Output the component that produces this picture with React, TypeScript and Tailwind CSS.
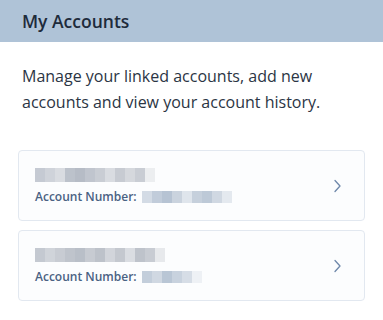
const Blur = ({ shades, h = "h-[14px]" }: { shades: string[]; h?: string }) => (
  <div className={`flex ${h} blur-[0.7px]`}>
    {shades.map((c, i) => (
      <div key={i} className="w-[10px] h-full" style={{ background: c }} />
    ))}
  </div>
);

const Chevron = () => (
  <svg width="10" height="14" viewBox="0 0 10 14" fill="none" className="text-[#6e88aa]">
    <path d="M3 1.5L8 7L3 12.5" stroke="currentColor" strokeWidth="1.3" strokeLinecap="round" strokeLinejoin="round" />
  </svg>
);

const accounts = [
  {
    name: ["#c5cad3", "#cfd3da", "#d9dce1", "#bcc2cb", "#b6bcc6", "#c0c5ce", "#c9cdd4", "#d9dce1", "#c7cbd2", "#d5d8dd", "#c9cdd4", "#eceef0"],
    num: ["#d3dbe5", "#c1ccda", "#b6c3d3", "#cad3de", "#dfe5ec", "#c6d0dc", "#bdc9d7", "#d0d8e2", "#e4e9ef"],
  },
  {
    name: ["#c4c9d1", "#d0d4da", "#c8ccd3", "#bfc4cc", "#b9bfc8", "#c7cbd2", "#bdc2ca", "#d2d5db", "#c4c8cf", "#dadde2", "#bec3cb", "#c8ccd3", "#e7e9ec"],
    num: ["#c3cedb", "#d0d8e2", "#b9c6d5", "#c8d2de", "#d6dde6", "#eef1f5"],
  },
];

export default function App() {
  return (
    <div className="w-[383px] h-[320px] bg-white font-['Open_Sans',sans-serif]">
      <div className="h-[42px] bg-[#afc3d7] flex items-center px-[22px]">
        <h1 className="text-[17.5px] font-semibold text-[#1e2b3b]">My Accounts</h1>
      </div>
      <p className="px-[22px] pt-[21px] text-[16px] leading-[26px] text-[#2b3544]">
        Manage your linked accounts, add new accounts and view your account history.
      </p>
      <div className="flex flex-col gap-[9px] px-[18px] mt-[35px]">
        {accounts.map((a, i) => (
          <div
            key={i}
            className="h-[71px] rounded-[4px] border border-[#e2e8f0] bg-[#fcfdfe] flex items-center justify-between pl-[16px] pr-[22px]"
          >
            <div className="flex flex-col gap-[6px] pt-[2px]">
              <Blur shades={a.name} />
              <div className="flex items-center gap-[5px]">
                <span className="text-[12px] font-semibold text-[#4a6283]">Account Number:</span>
                <Blur shades={a.num} h="h-[12px]" />
              </div>
            </div>
            <Chevron />
          </div>
        ))}
      </div>
    </div>
  );
}
